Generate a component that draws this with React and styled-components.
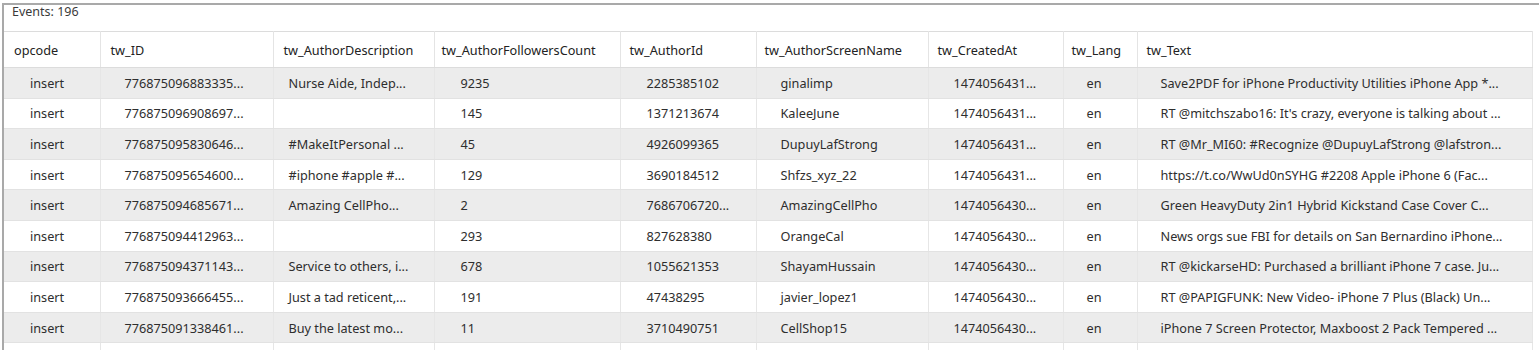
import React from "react";
import styled, { createGlobalStyle } from "styled-components";

const GlobalStyle = createGlobalStyle`
  html, body {
    margin: 0;
    padding: 0;
    background: #ffffff;
  }
  body {
    font-family: "Noto Sans", "Open Sans", sans-serif;
    color: #2e2e2e;
  }
`;

const Frame = styled.div`
  margin: 3px 0 0 2px;
  border-top: 2px solid #a9a9a9;
  border-left: 2px solid #a9a9a9;
  height: 345px;
  overflow: hidden;
  background: #ffffff;
`;

const EventsBar = styled.div`
  height: 26px;
  padding-left: 8px;
  font-size: 12.5px;
  line-height: 14px;
  color: #3a3a3a;
`;

const Grid = styled.table`
  width: 1528px;
  table-layout: fixed;
  border-collapse: collapse;
  font-size: 12.7px;
`;

const HeadCell = styled.th`
  height: 35px;
  padding: 0 0 0 ${(p) => p.$pad}px;
  text-align: left;
  font-weight: 400;
  color: #222222;
  border-top: 1px solid #dcdcdc;
  border-bottom: 1px solid #dcdcdc;
  border-right: 1px solid #e4e4e4;
  white-space: nowrap;
  overflow: hidden;
`;

const Row = styled.tr`
  height: 30.6px;
  background: ${(p) => (p.$odd ? "#ececec" : "#ffffff")};
`;

const Cell = styled.td`
  padding: 0 0 0 ${(p) => p.$pad}px;
  color: #2e2e2e;
  border-bottom: 1px solid #e2e2e2;
  border-right: 1px solid #e6e6e6;
  white-space: nowrap;
  overflow: hidden;
`;

const columns = [
  { key: "opcode", width: 96, head: 10, pad: 26 },
  { key: "tw_ID", width: 173, head: 10, pad: 24 },
  { key: "tw_AuthorDescription", width: 161, head: 10, pad: 15 },
  { key: "tw_AuthorFollowersCount", width: 186, head: 7, pad: 26 },
  { key: "tw_AuthorId", width: 136, head: 9, pad: 26 },
  { key: "tw_AuthorScreenName", width: 172, head: 8, pad: 24 },
  { key: "tw_CreatedAt", width: 135, head: 9, pad: 25 },
  { key: "tw_Lang", width: 74, head: 8, pad: 23 },
  { key: "tw_Text", width: 395, head: 9, pad: 23 },
];

const rows = [
  ["insert", "776875096883335...", "Nurse Aide, Indep...", "9235", "2285385102", "ginalimp", "1474056431...", "en", "Save2PDF for iPhone Productivity Utilities iPhone App *..."],
  ["insert", "776875096908697...", "", "145", "1371213674", "KaleeJune", "1474056431...", "en", "RT @mitchszabo16: It's crazy, everyone is talking about ..."],
  ["insert", "776875095830646...", "#MakeItPersonal ...", "45", "4926099365", "DupuyLafStrong", "1474056431...", "en", "RT @Mr_MI60: #Recognize @DupuyLafStrong @lafstron..."],
  ["insert", "776875095654600...", "#iphone #apple #...", "129", "3690184512", "Shfzs_xyz_22", "1474056431...", "en", "https://t.co/WwUd0nSYHG #2208 Apple iPhone 6 (Fac..."],
  ["insert", "776875094685671...", "Amazing CellPho...", "2", "7686706720...", "AmazingCellPho", "1474056430...", "en", "Green HeavyDuty 2in1 Hybrid Kickstand Case Cover C..."],
  ["insert", "776875094412963...", "", "293", "827628380", "OrangeCal", "1474056430...", "en", "News orgs sue FBI for details on San Bernardino iPhone..."],
  ["insert", "776875094371143...", "Service to others, i...", "678", "1055621353", "ShayamHussain", "1474056430...", "en", "RT @kickarseHD: Purchased a brilliant iPhone 7 case. Ju..."],
  ["insert", "776875093666455...", "Just a tad reticent,...", "191", "47438295", "javier_lopez1", "1474056430...", "en", "RT @PAPIGFUNK: New Video- iPhone 7 Plus (Black) Un..."],
  ["insert", "776875091338461...", "Buy the latest mo...", "11", "3710490751", "CellShop15", "1474056430...", "en", "iPhone 7 Screen Protector, Maxboost 2 Pack Tempered ..."],
  ["", "", "", "", "", "", "", "", ""],
];

export default function App() {
  return (
    <>
      <GlobalStyle />
      <Frame>
        <EventsBar>Events: 196</EventsBar>
        <Grid>
          <colgroup>
            {columns.map((c) => (
              <col key={c.key} style={{ width: c.width }} />
            ))}
          </colgroup>
          <thead>
            <tr>
              {columns.map((c) => (
                <HeadCell key={c.key} $pad={c.head}>
                  {c.key}
                </HeadCell>
              ))}
            </tr>
          </thead>
          <tbody>
            {rows.map((r, i) => (
              <Row key={i} $odd={i % 2 === 0}>
                {r.map((v, j) => (
                  <Cell key={j} $pad={columns[j].pad}>
                    {v}
                  </Cell>
                ))}
              </Row>
            ))}
          </tbody>
        </Grid>
      </Frame>
    </>
  );
}
